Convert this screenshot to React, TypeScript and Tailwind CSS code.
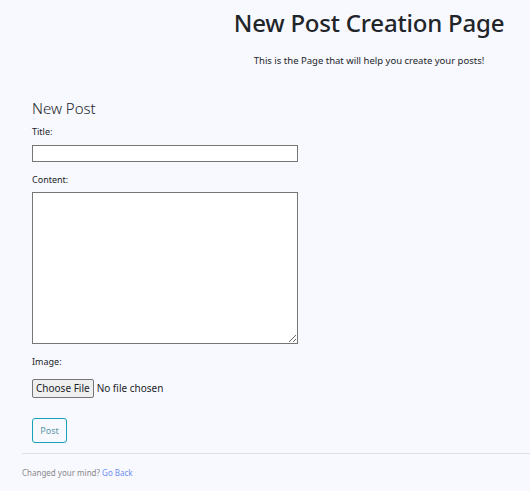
export default function App() {
  return (
    <div className="w-[530px] h-[491px] overflow-hidden bg-[#f8f8ff] text-[#212529] font-['Noto_Sans',sans-serif]">
      {/* Header */}
      <header className="pl-[208px] pt-[9px] text-center">
        <h1 className="text-[24px] leading-[28px] font-medium tracking-[-0.2px]">New Post Creation Page</h1>
        <p className="mt-[17px] text-[9.5px] leading-[14px]">
          This is the Page that will help you create your posts!
        </p>
      </header>

      {/* Form */}
      <form className="px-[32px] mt-[30px]" onSubmit={(e) => e.preventDefault()}>
        <h2 className="text-[15px] leading-[20px] font-light">New Post</h2>
        <label className="block mt-[8px] text-[9px] leading-[12px]">Title:</label>
        <input
          type="text"
          className="block mt-[7px] w-[266px] h-[17px] bg-white border border-[#767676]"
        />
        <label className="block mt-[12px] text-[9px] leading-[12px]">Content:</label>
        <textarea className="block mt-[6px] w-[266px] h-[152px] bg-white border border-[#767676]" />
        <label className="block mt-[12px] text-[9px] leading-[12px]">Image:</label>
        <input type="file" className="block mt-[11px] text-[10px] file:px-[3px] file:py-[1px] file:bg-[#efefef] file:border file:border-[#767676] file:rounded-[2px] file:mr-[3px]" />
        <button
          type="submit"
          className="block mt-[20px] w-[35px] h-[25px] text-[9px] text-[#5a9aa6] border border-[#17a2b8] rounded-[3px]"
        >
          Post
        </button>
      </form>

      {/* Footer */}
      <hr className="ml-[22px] mt-[10px] border-t border-[#dee2e6]" />
      <p className="px-[22px] mt-[13px] text-[8px] leading-[12px] text-[#8a8a8a]">
        Changed your mind? <a href="#" className="text-[#6f8ef0]">Go Back</a>
      </p>
    </div>
  );
}
